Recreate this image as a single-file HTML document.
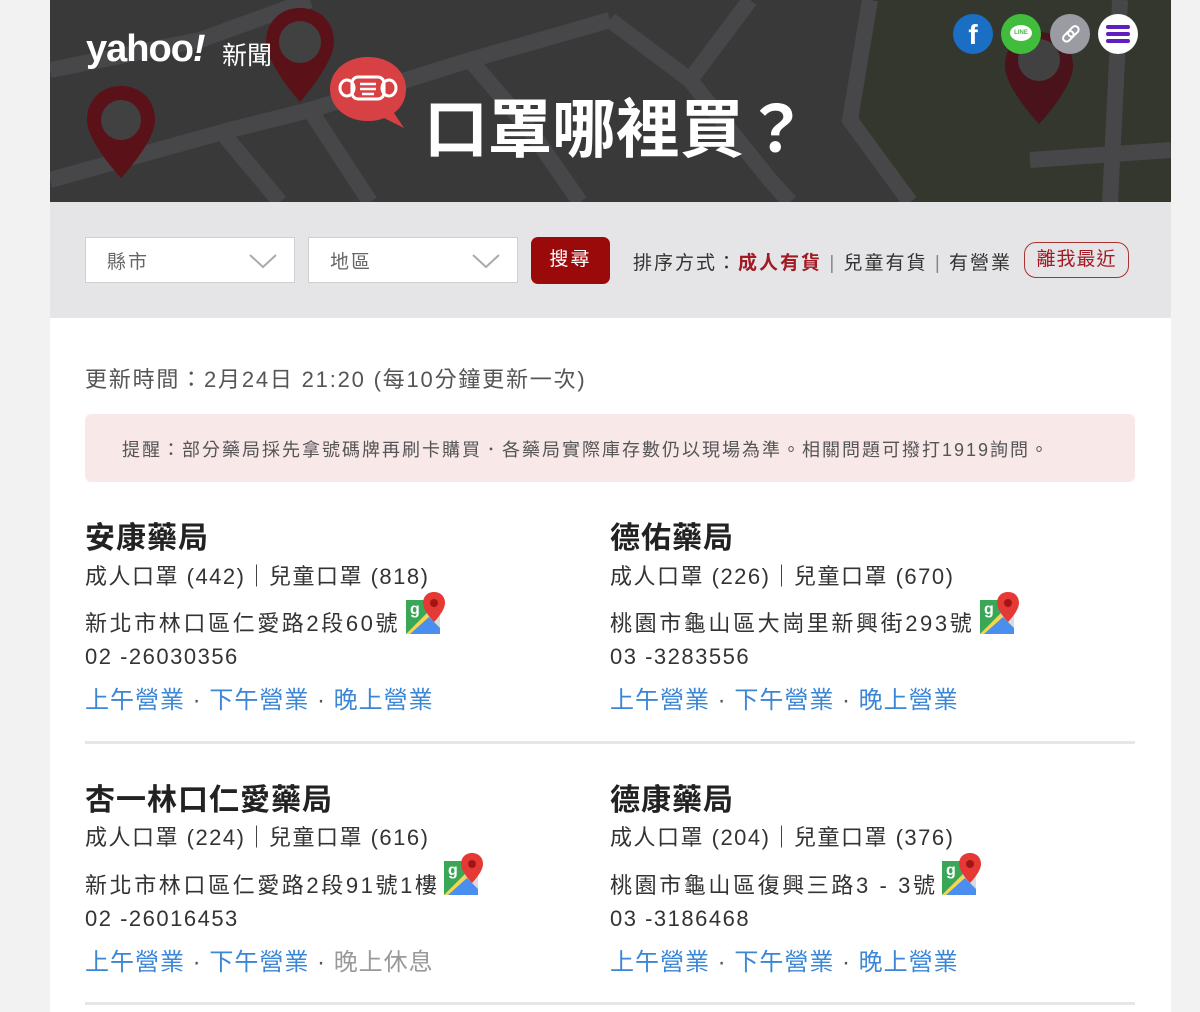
<!DOCTYPE html>
<html><head><meta charset="utf-8"><style>
*{margin:0;padding:0;box-sizing:border-box}
body{width:1200px;height:1012px;background:#f2f2f2;font-family:"Liberation Sans","Noto Sans CJK TC",sans-serif;position:relative;overflow:hidden}
.a{position:absolute;white-space:nowrap}
#wrap{position:absolute;left:50px;top:0;width:1121px;height:1012px;background:#fff}
#hdr{position:absolute;left:0;top:0;width:1121px;height:202px;background:#393939;overflow:hidden}
#bar{position:absolute;left:0;top:202px;width:1121px;height:116px;background:#e5e5e7}
.sel{position:absolute;top:237px;height:46px;background:#fff;border:1px solid #d0d0d0;font-size:19px;color:#666;padding:9px 0 0 21px;letter-spacing:2px}
.sel svg{position:absolute;right:16px;top:14px}
.name{font-size:30px;font-weight:bold;color:#222;letter-spacing:1px}
.t{font-size:22px;color:#333;letter-spacing:1.5px}
.t2{letter-spacing:2.6px}
.h{font-size:24px;color:#3b86d6;letter-spacing:1px}
.g{color:#999}
.dv{position:absolute;left:85px;width:1050px;height:3px;background:#e6e6e6}
</style></head><body>
<div id="wrap">
<div id="hdr">
<svg width="1121" height="202" style="position:absolute;left:0;top:0">
<polygon points="820,0 1121,0 1121,202 860,202 800,120" fill="#33372d"/>
<g stroke="#474749" stroke-width="16" fill="none">
<path d="M0,70 L150,40 L260,0"/><path d="M0,180 L180,130 L260,110 L420,60 L560,20"/>
<path d="M170,130 L230,202"/><path d="M260,110 L320,202"/><path d="M420,60 L480,130 L530,202"/>
<path d="M560,20 L640,80 L720,180 L740,202"/><path d="M700,0 L640,80"/><path d="M820,0 L800,120 L860,202"/>
<path d="M980,160 L1121,150"/><path d="M1070,0 L1060,202"/>
</g>
</svg>
<svg width="80" height="100" style="position:absolute;left:35px;top:82px"><path d="M36,4 C16,4 2,18 2,38 C2,60 36,96 36,96 C36,96 70,60 70,38 C70,18 56,4 36,4Z" fill="#5a1218"/><circle cx="36" cy="38" r="20" fill="#414141"/></svg>
<svg width="80" height="100" style="position:absolute;left:214px;top:6px"><path d="M36,2 C16,2 2,16 2,36 C2,58 36,96 36,96 C36,96 70,58 70,36 C70,16 56,2 36,2Z" fill="#5a1218"/><circle cx="36" cy="36" r="21" fill="#414141"/></svg>
<svg width="80" height="100" style="position:absolute;left:953px;top:30px"><path d="M36,2 C16,2 2,16 2,36 C2,58 36,94 36,94 C36,94 70,58 70,36 C70,16 56,2 36,2Z" fill="#4a121a"/><circle cx="36" cy="30" r="21" fill="#414141"/></svg>
<svg width="84" height="80" style="position:absolute;left:278px;top:55px"><path d="M40,2 C18,2 2,16 2,34 C2,52 18,66 40,66 C46,66 52,65 56,63 L76,73 L66,58 C74,52 78,44 78,34 C78,16 62,2 40,2Z" fill="#d84144"/><rect x="24" y="22" width="32" height="22" rx="6" fill="none" stroke="#fff" stroke-width="3"/><ellipse cx="19" cy="33" rx="7" ry="8" fill="none" stroke="#fff" stroke-width="3"/><ellipse cx="61" cy="33" rx="7" ry="8" fill="none" stroke="#fff" stroke-width="3"/><path d="M32,29h16M32,34h16M34,39h12" stroke="#fff" stroke-width="2.5"/></svg>
<div class="a" style="left:36px;top:28px;font-size:38px;font-weight:bold;color:#fff;letter-spacing:-1px;font-family:'Liberation Sans',sans-serif">yahoo<span style="font-style:italic">!</span></div>
<div class="a" style="left:172px;top:36px;font-size:25px;color:#fff">新聞</div>
<div class="a" style="left:374px;top:92px;font-size:64px;font-weight:bold;color:#fff;line-height:76px">口罩哪裡買？</div>
<div class="a" style="left:903px;top:14px;width:40px;height:40px;border-radius:50%;background:#1a6fc4;color:#fff;font-size:28px;font-weight:bold;text-align:center;line-height:42px">f</div>
<div class="a" style="left:951px;top:14px;width:40px;height:40px;border-radius:50%;background:#41bc3d"><div style="position:absolute;left:9px;top:11px;width:22px;height:16px;background:#fff;border-radius:50%;font-size:6px;color:#41bc3d;text-align:center;line-height:16px;font-weight:bold">LINE</div></div>
<div class="a" style="left:1000px;top:14px;width:40px;height:40px;border-radius:50%;background:#9a9ba3"><svg width="40" height="40"><g fill="none" stroke="#fff" stroke-width="2"><rect x="12" y="19" width="12" height="7" rx="3.5" transform="rotate(-45 18 22)"/><rect x="17" y="14" width="12" height="7" rx="3.5" transform="rotate(-45 23 17)"/></g></svg></div>
<div class="a" style="left:1048px;top:14px;width:40px;height:40px;border-radius:50%;background:#fff"><svg width="40" height="40"><path d="M10,13h20M10,20h20M10,27h20" stroke="#5f1fbf" stroke-width="4" stroke-linecap="round"/></svg></div>
</div>
<div id="bar"></div>
</div>
<div class="sel" style="left:85px;width:210px">縣市<svg width="30" height="18"><path d="M2,3 L15,15 L28,3" stroke="#aaa" stroke-width="2" fill="none"/></svg></div>
<div class="sel" style="left:308px;width:210px">地區<svg width="30" height="18"><path d="M2,3 L15,15 L28,3" stroke="#aaa" stroke-width="2" fill="none"/></svg></div>
<div class="a" style="left:531px;top:237px;width:79px;height:47px;background:#9b0a0a;border-radius:7px;color:#fff;font-size:19px;text-align:center;line-height:46px;letter-spacing:2px">搜尋</div>
<div class="a" style="left:633px;top:248px;font-size:19px;color:#333;letter-spacing:2px">排序方式：<b style="color:#a11b25">成人有貨</b> <span style="color:#888">|</span> 兒童有貨 <span style="color:#888">|</span> 有營業</div>
<div class="a" style="left:1024px;top:242px;width:105px;height:36px;border:1.5px solid #a33;border-radius:12px;color:#a11b25;font-size:19px;text-align:center;line-height:33px;letter-spacing:1px">離我最近</div>
<div class="a" style="left:85px;top:362px;font-size:22px;color:#555;letter-spacing:1.8px">更新時間：2月24日 21:20 (每10分鐘更新一次)</div>
<div class="a" style="left:85px;top:414px;width:1050px;height:68px;background:#f8e8e8;border-radius:6px;font-size:18px;color:#555;padding:22px 0 0 37px;letter-spacing:2px">提醒：部分藥局採先拿號碼牌再刷卡購買．各藥局實際庫存數仍以現場為準。相關問題可撥打1919詢問。</div>

<div class="a name" style="left:85px;top:513px">安康藥局</div>
<div class="a t" style="left:85px;top:559px">成人口罩 (442)｜兒童口罩 (818)</div>
<div class="a t t2" style="left:85px;top:606px">新北市林口區仁愛路2段60號</div>
<div class="a t" style="left:85px;top:644px">02 -26030356</div>
<div class="a h" style="left:85px;top:680px">上午營業 <span style="color:#555">·</span> 下午營業 <span style="color:#555">·</span> 晚上營業</div>

<div class="a name" style="left:610px;top:513px">德佑藥局</div>
<div class="a t" style="left:610px;top:559px">成人口罩 (226)｜兒童口罩 (670)</div>
<div class="a t t2" style="left:610px;top:606px">桃園市龜山區大崗里新興街293號</div>
<div class="a t" style="left:610px;top:644px">03 -3283556</div>
<div class="a h" style="left:610px;top:680px">上午營業 <span style="color:#555">·</span> 下午營業 <span style="color:#555">·</span> 晚上營業</div>

<div class="dv" style="top:741px"></div>

<div class="a name" style="left:85px;top:775px">杏一林口仁愛藥局</div>
<div class="a t" style="left:85px;top:820px">成人口罩 (224)｜兒童口罩 (616)</div>
<div class="a t t2" style="left:85px;top:868px">新北市林口區仁愛路2段91號1樓</div>
<div class="a t" style="left:85px;top:906px">02 -26016453</div>
<div class="a h" style="left:85px;top:942px">上午營業 <span style="color:#555">·</span> 下午營業 <span style="color:#555">·</span> <span class="g">晚上休息</span></div>

<div class="a name" style="left:610px;top:775px">德康藥局</div>
<div class="a t" style="left:610px;top:820px">成人口罩 (204)｜兒童口罩 (376)</div>
<div class="a t t2" style="left:610px;top:868px">桃園市龜山區復興三路3 - 3號</div>
<div class="a t" style="left:610px;top:906px">03 -3186468</div>
<div class="a h" style="left:610px;top:942px">上午營業 <span style="color:#555">·</span> 下午營業 <span style="color:#555">·</span> 晚上營業</div>

<div class="dv" style="top:1002px"></div>

<svg width="0" height="0" style="position:absolute"><defs><g id="gm"><path d="M2,8 L2,42 L36,42 L36,8Z" fill="#3aa757"/><path d="M2,42 L22,22 L36,36 L36,42Z" fill="#4a8ef0"/><path d="M2,42 L22,22 L25,25 L6,42Z" fill="#f7d748"/><path d="M22,22 L36,8 L36,36Z" fill="#d9dde3"/><text x="6" y="22" font-size="16" font-weight="bold" fill="#fff" font-family="Liberation Sans">g</text><path d="M30,0 C23,0 19,5 19,11 C19,19 30,30 30,30 C30,30 41,19 41,11 C41,5 37,0 30,0Z" fill="#e53935"/><circle cx="30" cy="11" r="4" fill="#a31515"/></g></defs></svg>
<svg class="a" style="left:404px;top:592px" width="44" height="44"><use href="#gm"/></svg>
<svg class="a" style="left:978px;top:592px" width="44" height="44"><use href="#gm"/></svg>
<svg class="a" style="left:442px;top:853px" width="44" height="44"><use href="#gm"/></svg>
<svg class="a" style="left:940px;top:853px" width="44" height="44"><use href="#gm"/></svg>
</body></html>
